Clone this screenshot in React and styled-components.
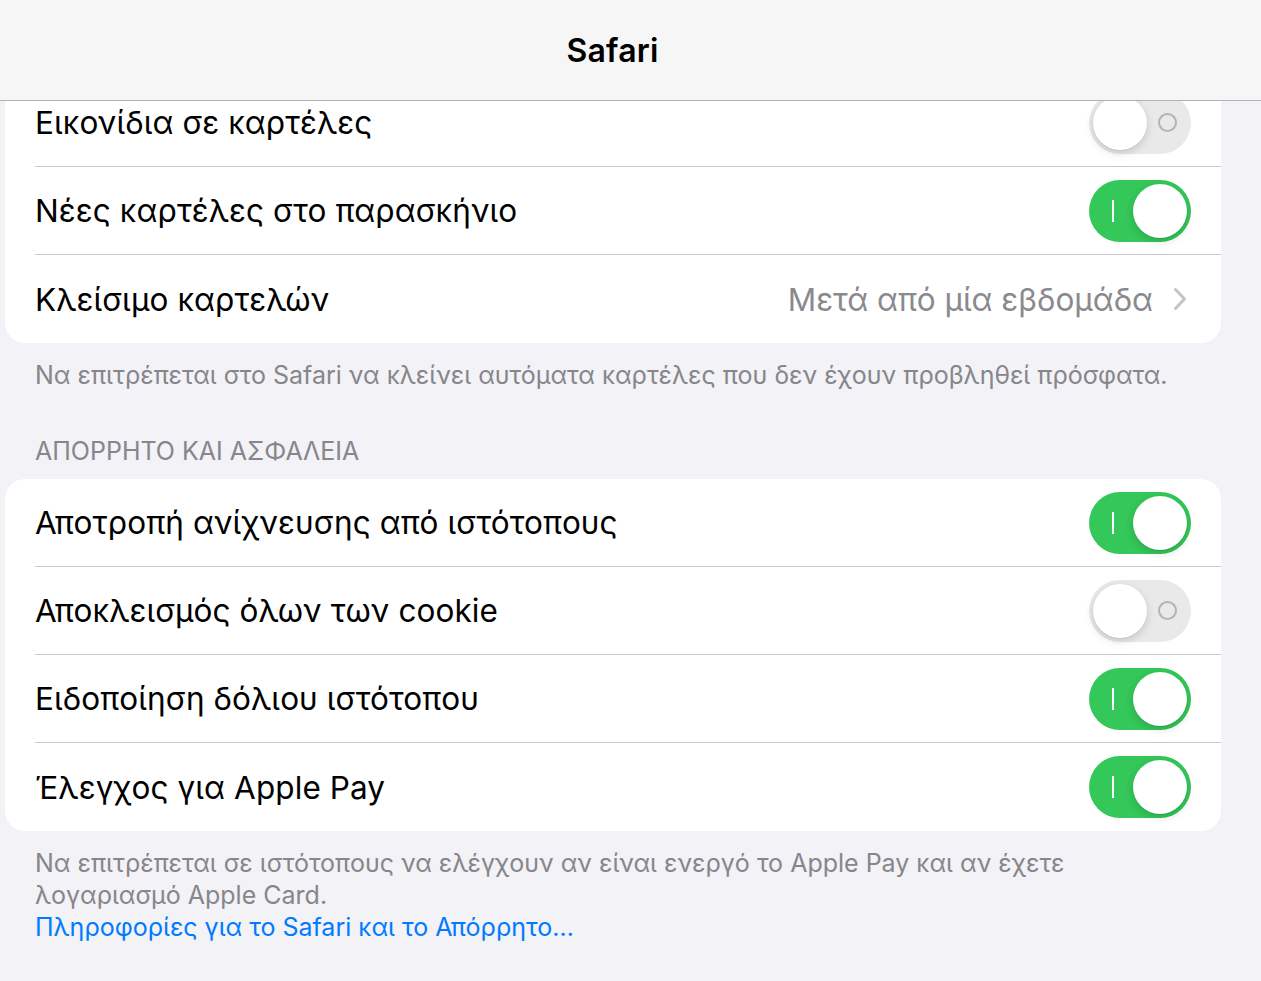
import styled, { createGlobalStyle } from "styled-components";

const GlobalStyle = createGlobalStyle`
  html, body {
    margin: 0;
    padding: 0;
    background: #f2f2f7;
    font-family: Inter, "Noto Sans", "Liberation Sans", sans-serif;
  }
`;

const Page = styled.div`
  width: 1261px;
  height: 981px;
  overflow: hidden;
  position: relative;
  background: #f2f2f7;
`;

const NavBar = styled.header`
  position: absolute;
  top: 0;
  left: 0;
  right: 0;
  height: 100px;
  padding-right: 36px;
  background: #f6f6f6;
  border-bottom: 1px solid #b2b2b2;
  display: flex;
  align-items: center;
  justify-content: center;
  z-index: 2;
`;

const Title = styled.h1`
  margin: 0;
  font-size: 32px;
  font-weight: 600;
  color: #000;
  letter-spacing: 0.2px;
`;

const Content = styled.main`
  padding: 79px 40px 0 5px;
  display: flex;
  flex-direction: column;
`;

const Card = styled.section`
  background: #fff;
  border-radius: 20px;
  padding-left: 30px;
  overflow: hidden;
`;

const Row = styled.div`
  height: 88px;
  display: flex;
  align-items: center;
  justify-content: space-between;
  padding-right: ${(p) => (p.$value ? "34px" : "30px")};
  border-bottom: ${(p) => (p.$last ? "none" : "1px solid #c8c8cc")};
  box-sizing: border-box;
`;

const Label = styled.span`
  font-size: 31.5px;
  color: #000;
  letter-spacing: 0.1px;
`;

const Value = styled.span`
  display: flex;
  align-items: center;
  gap: 20px;
  font-size: 31.5px;
  color: #8a8a8e;
`;

const Footer = styled.p`
  margin: 16px 0 0 30px;
  font-size: 25px;
  line-height: 32px;
  color: #86868b;
`;

const SectionHeader = styled.h2`
  margin: 44px 0 12px 30px;
  font-size: 25px;
  font-weight: 400;
  line-height: 32px;
  color: #86868b;
`;

const Link = styled.span`
  display: block;
  color: #007aff;
`;

const Track = styled.div`
  width: 102px;
  height: 62px;
  border-radius: 31px;
  padding: 4px;
  box-sizing: border-box;
  display: flex;
  flex-direction: ${(p) => (p.$on ? "row" : "row-reverse")};
  align-items: center;
  background: ${(p) => (p.$on ? "#34c759" : "#e9e9ea")};
  flex-shrink: 0;
`;

const Knob = styled.div`
  width: 54px;
  height: 54px;
  border-radius: 50%;
  background: #fff;
  box-shadow: 0 3px 8px rgba(0, 0, 0, 0.15), 0 1px 1px rgba(0, 0, 0, 0.06);
`;

const Mark = styled.div`
  flex: 1;
  display: flex;
  align-items: center;
  justify-content: center;
`;

const OnLine = styled.div`
  width: 2px;
  height: 22px;
  background: #fff;
`;

const OffRing = styled.div`
  width: 15px;
  height: 15px;
  border-radius: 50%;
  border: 2px solid #b3b3b3;
`;

const Toggle = ({ on }) => (
  <Track $on={on}>
    <Mark>{on ? <OnLine /> : <OffRing />}</Mark>
    <Knob />
  </Track>
);

const Chevron = () => (
  <svg width="14" height="24" viewBox="0 0 14 24" fill="none">
    <path d="M2.5 2.5 L11.5 12 L2.5 21.5" stroke="#c4c4c7" strokeWidth="3" strokeLinecap="round" strokeLinejoin="round" />
  </svg>
);

const tabs = [
  { label: "Εικονίδια σε καρτέλες", on: false },
  { label: "Νέες καρτέλες στο παρασκήνιο", on: true },
];

const privacy = [
  { label: "Αποτροπή ανίχνευσης από ιστότοπους", on: true },
  { label: "Αποκλεισμός όλων των cookie", on: false },
  { label: "Ειδοποίηση δόλιου ιστότοπου", on: true },
  { label: "Έλεγχος για Apple Pay", on: true },
];

export default function App() {
  return (
    <Page>
      <GlobalStyle />
      <NavBar>
        <Title>Safari</Title>
      </NavBar>
      <Content>
        <Card>
          {tabs.map((r) => (
            <Row key={r.label}>
              <Label>{r.label}</Label>
              <Toggle on={r.on} />
            </Row>
          ))}
          <Row $last $value>
            <Label>Κλείσιμο καρτελών</Label>
            <Value>
              Μετά από μία εβδομάδα
              <Chevron />
            </Value>
          </Row>
        </Card>
        <Footer>
          Να επιτρέπεται στο Safari να κλείνει αυτόματα καρτέλες που δεν έχουν προβληθεί πρόσφατα.
        </Footer>
        <SectionHeader>ΑΠΟΡΡΗΤΟ ΚΑΙ ΑΣΦΑΛΕΙΑ</SectionHeader>
        <Card>
          {privacy.map((r, i) => (
            <Row key={r.label} $last={i === privacy.length - 1}>
              <Label>{r.label}</Label>
              <Toggle on={r.on} />
            </Row>
          ))}
        </Card>
        <Footer>
          Να επιτρέπεται σε ιστότοπους να ελέγχουν αν είναι ενεργό το Apple Pay και αν έχετε
          <br />
          λογαριασμό Apple Card.
          <Link>Πληροφορίες για το Safari και το Απόρρητο…</Link>
        </Footer>
      </Content>
    </Page>
  );
}
